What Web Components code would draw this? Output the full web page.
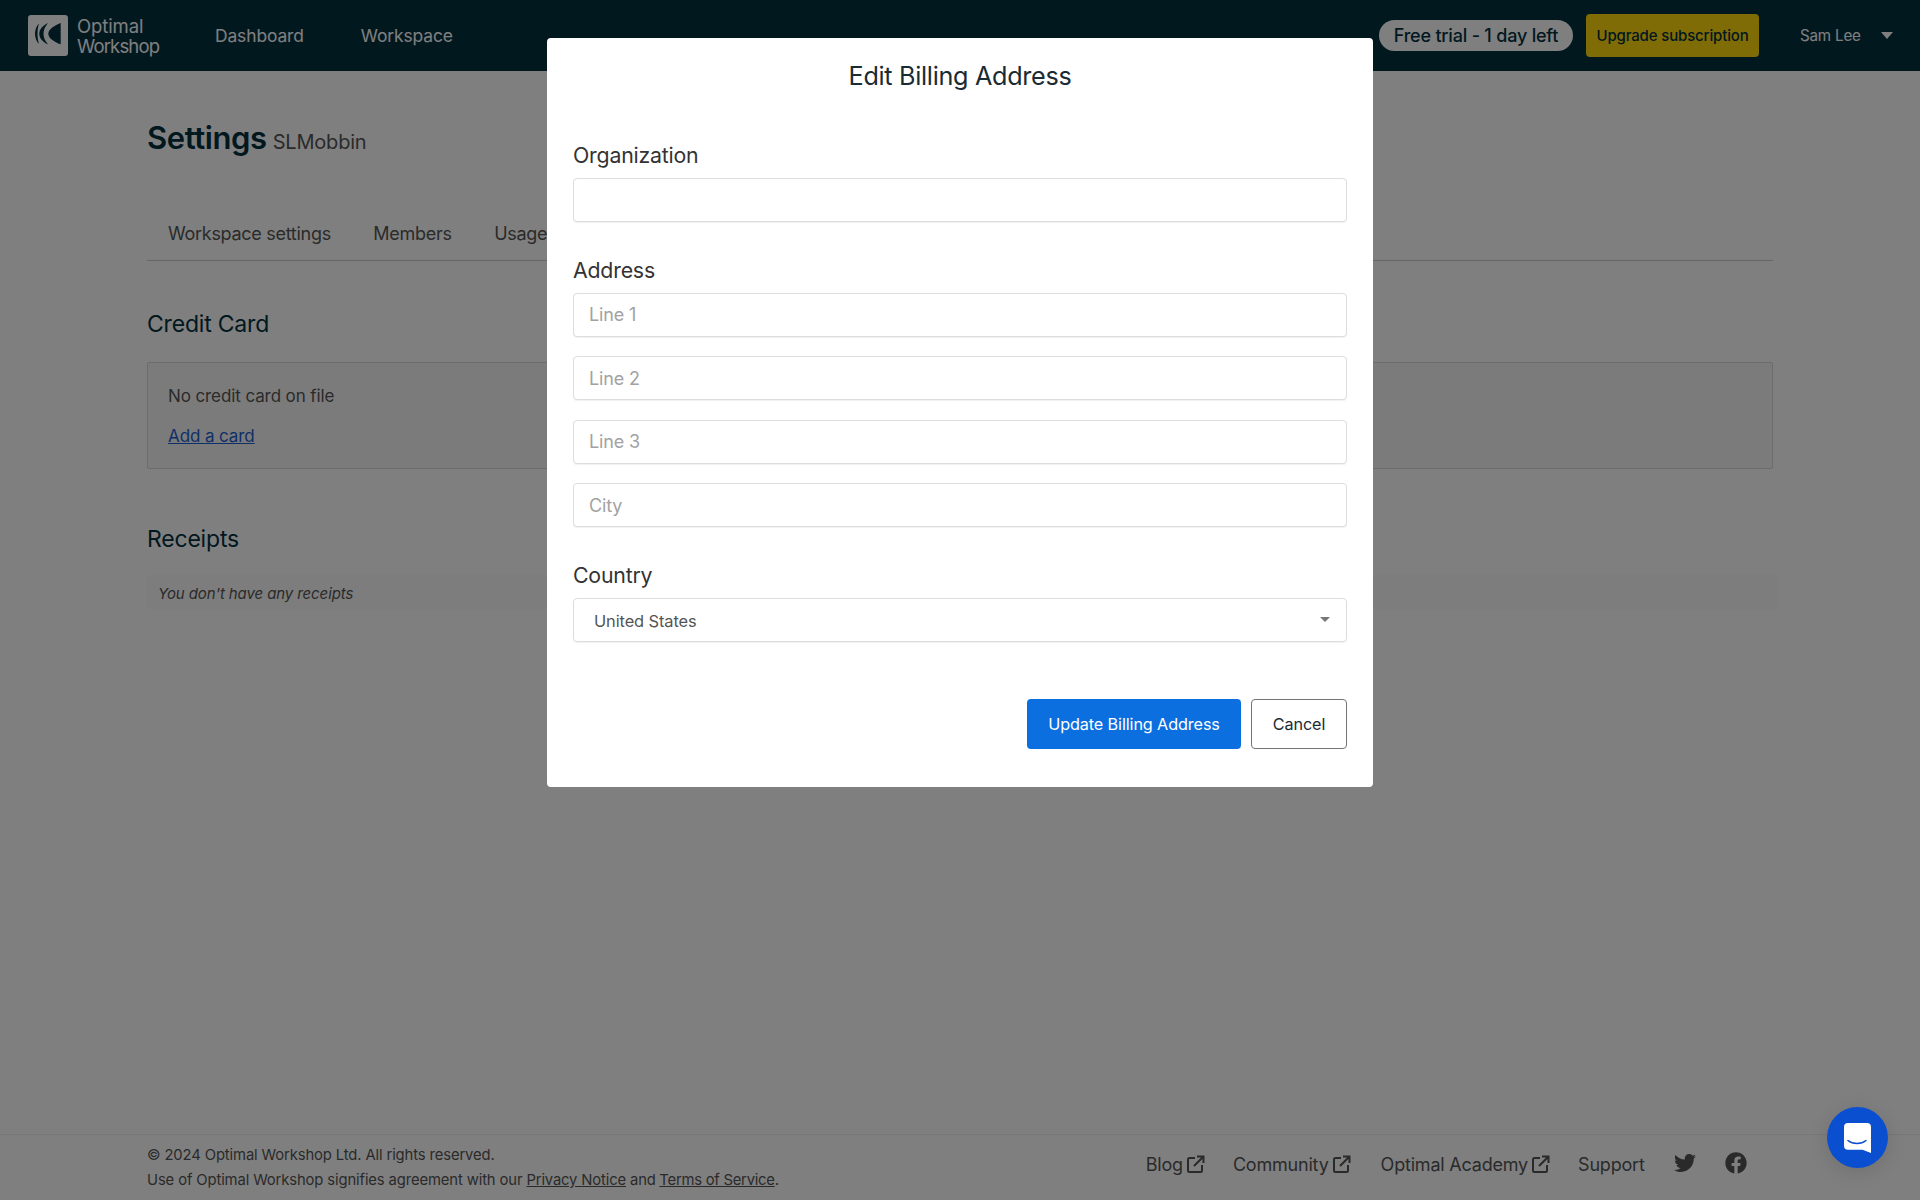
<!doctype html>
<html>
  <head>
    <title>Settings • Edit Billing Address</title>
    <style>
      :root {
        --ui-font: Inter, "Noto Sans", "Liberation Sans", sans-serif;
      }

      html, body {
        height: 100%;
      }

      body {
        margin: 0;
        background: #fff;
        color: #1b2b33;
        font-family: var(--ui-font);
        overflow: hidden;
      }

      settings-page {
        height: 100vh;
      }
    </style>
  </head>
  <body>
    <settings-page>
      <app-header slot="header"></app-header>

      <page-title name="Settings" account="SLMobbin"></page-title>
      <tab-bar>
        <tab-item>Workspace settings</tab-item>
        <tab-item>Members</tab-item>
        <tab-item>Usage</tab-item>
      </tab-bar>

      <section-block heading="Credit Card" style="--head-gap: 23px; padding-top: 48px">
        <info-panel>
          <div>No credit card on file</div>
          <a href="#">Add a card</a>
        </info-panel>
      </section-block>

      <section-block heading="Receipts" style="--head-gap: 21px; margin-top: 55px">
        <empty-row>You don't have any receipts</empty-row>
      </section-block>

      <app-footer slot="footer"></app-footer>
    </settings-page>

    <modal-backdrop>
      <billing-modal></billing-modal>
    </modal-backdrop>

    <chat-launcher></chat-launcher>

    <!-- lib code below -->

    <template data-name="settings-page">
      <style>
        :host {
          box-sizing: border-box;
          display: flex;
          flex-direction: column;
        }

        main {
          flex: 1;
          padding: 0 147px 0 147px;
        }
      </style>

      <slot name="header"></slot>
      <main><slot></slot></main>
      <slot name="footer"></slot>
    </template>

    <template data-name="app-header">
      <style>
        :host {
          align-items: center;
          background: #04303f;
          box-sizing: border-box;
          display: flex;
          height: 71px;
          padding: 0 27px 0 28px;
        }

        .logo {
          align-items: center;
          color: #fff;
          display: flex;
          font-size: 18.5px;
          gap: 9px;
          line-height: 20px;
          letter-spacing: -0.1px;
          width: 187px;
        }

        .logo svg {
          display: block;
        }

        .logo b {
          font-weight: 400;
          letter-spacing: -0.85px;
        }

        nav {
          display: flex;
          flex: 1;
          gap: 57px;
        }

        nav span {
          color: #fff;
          font-size: 17.4px;
          letter-spacing: -0.1px;
        }

        .trial {
          background: #fff;
          border-radius: 16px;
          box-sizing: border-box;
          color: #04303f;
          font-size: 18px;
          font-weight: 500;
          height: 31px;
          letter-spacing: -0.2px;
          line-height: 31px;
          text-align: center;
          width: 194px;
        }

        .upgrade {
          background: #ffd90c;
          border-radius: 4px;
          box-sizing: border-box;
          color: #04303f;
          font-size: 15px;
          font-weight: 500;
          height: 43px;
          letter-spacing: -0.15px;
          line-height: 43px;
          margin: 0 41px 0 13px;
          text-align: center;
          width: 173px;
        }

        .user {
          color: #fff;
          font-size: 15.2px;
          letter-spacing: -0.2px;
          width: 81px;
        }

        .caret {
          border-left: 6px solid transparent;
          border-right: 6px solid transparent;
          border-top: 7px solid #fff;
          height: 0;
          width: 0;
        }
      </style>

      <div class="logo">
        <svg width="40" height="41" viewBox="0 0 40 41">
          <rect width="40" height="41" rx="3" fill="#fff"/>
          <path fill="#04303f" d="M32.700 8 C26 10.500 20.300 14.500 20.300 18.700 C20.300 23 26 27 32.700 29.300 Z"/>
          <path fill="#04303f" d="M20 8 C14.500 10.500 11.300 14.500 11.300 18.700 C11.300 23 14.500 27 20 29.300 C17 26 15.500 22.500 15.500 18.700 C15.500 15 17 11.500 20 8 Z"/>
          <path fill="#04303f" d="M11 8.500 C8.500 11 7 14.500 7 18.700 C7 23 8.500 26.500 11 29 C10 26 9.500 22.500 9.500 18.700 C9.500 15 10 11.500 11 8.500 Z"/>
        </svg>
        <div>Optimal<br><b>Workshop</b></div>
      </div>
      <nav>
        <span>Dashboard</span>
        <span>Workspace</span>
      </nav>
      <div class="trial">Free trial - 1 day left</div>
      <div class="upgrade">Upgrade subscription</div>
      <div class="user">Sam Lee</div>
      <div class="caret"></div>
    </template>

    <template data-name="page-title">
      <style>
        :host {
          align-items: baseline;
          display: flex;
          gap: 6px;
          padding-top: 45.5px;
        }

        h1 {
          color: #04303f;
          font-size: 31px;
          font-weight: 600;
          letter-spacing: -0.4px;
          line-height: 42px;
          margin: 0;
        }

        span {
          color: #555;
          font-size: 20px;
          letter-spacing: -0.2px;
        }
      </style>

      <h1></h1>
      <span></span>
    </template>

    <template data-name="tab-bar">
      <style>
        :host {
          border-bottom: 1px solid #ccc;
          display: flex;
          gap: 42.5px;
          height: 50px;
          margin-top: 51.5px;
          padding-left: 21px;
        }
      </style>

      <slot></slot>
    </template>

    <template data-name="tab-item">
      <style>
        :host {
          color: #555;
          display: block;
          font-size: 18px;
          letter-spacing: -0.29px;
          line-height: 26px;
          padding-top: 11px;
        }
      </style>

      <slot></slot>
    </template>

    <template data-name="section-block">
      <style>
        :host {
          display: block;
        }

        h2 {
          color: #04303f;
          font-size: 23px;
          font-weight: 400;
          letter-spacing: -0.2px;
          line-height: 30px;
          margin: 0 0 var(--head-gap);
        }
      </style>

      <h2></h2>
      <slot></slot>
    </template>

    <template data-name="info-panel">
      <style>
        :host {
          background: #f7f7f7;
          border: 1px solid #d8d8d8;
          border-radius: 2px;
          box-sizing: border-box;
          color: #555;
          display: flex;
          flex-direction: column;
          font-size: 17px;
          gap: 16px;
          height: 107px;
          letter-spacing: -0.1px;
          line-height: 24px;
          padding: 21px 20px;
        }

        ::slotted(a) {
          color: #1f5fd0;
          text-decoration: underline;
        }
      </style>

      <slot></slot>
    </template>

    <template data-name="empty-row">
      <style>
        :host {
          background: #fafafa;
          box-sizing: border-box;
          color: #555;
          display: block;
          font-size: 15px;
          font-style: italic;
          height: 34px;
          letter-spacing: -0.1px;
          line-height: 35px;
          margin-right: -4px;
          padding: 1px 0 0 11px;
        }
      </style>

      <slot></slot>
    </template>

    <template data-name="app-footer">
      <style>
        :host {
          align-items: flex-start;
          border-top: 1px solid #eee;
          box-sizing: border-box;
          color: #555;
          display: flex;
          height: 66px;
          justify-content: space-between;
          padding: 8px 173px 0 147px;
        }

        .legal {
          font-size: 14.8px;
          letter-spacing: -0.12px;
          line-height: 25px;
        }

        .legal a {
          color: inherit;
          letter-spacing: -0.14px;
          text-decoration: underline;
        }

        .legal a.terms {
          letter-spacing: -0.24px;
          margin-left: -0.5px;
        }

        .links {
          align-items: center;
          display: flex;
          font-size: 18px;
          letter-spacing: -0.2px;
          padding-top: 11px;
        }

        .links span {
          align-items: center;
          display: flex;
          gap: 3px;
          margin-right: 28px;
        }

        .links span.wide {
          margin-right: 30px;
        }

        .links svg {
          display: block;
        }
      </style>

      <div class="legal">
        <div>© 2024 Optimal Workshop Ltd. All rights reserved.</div>
        <div>Use of Optimal Workshop signifies agreement with our <a href="#">Privacy Notice</a> and <a class="terms" href="#">Terms of Service</a>.</div>
      </div>
      <div class="links">
        <span>Blog<svg width="19" height="19" viewBox="0 0 19 19" fill="none" stroke="#555" stroke-width="2"><path d="M9 3H3.500A1.500 1.500 0 0 0 2 4.500V15.500A1.500 1.500 0 0 0 3.500 17H14.500A1.500 1.500 0 0 0 16 15.500V10"/><path d="M8 11L17 2M11 1.500H17.500V8"/></svg></span>
        <span class="wide">Community<svg width="19" height="19" viewBox="0 0 19 19" fill="none" stroke="#555" stroke-width="2"><path d="M9 3H3.500A1.500 1.500 0 0 0 2 4.500V15.500A1.500 1.500 0 0 0 3.500 17H14.500A1.500 1.500 0 0 0 16 15.500V10"/><path d="M8 11L17 2M11 1.500H17.500V8"/></svg></span>
        <span>Optimal Academy<svg width="19" height="19" viewBox="0 0 19 19" fill="none" stroke="#555" stroke-width="2"><path d="M9 3H3.500A1.500 1.500 0 0 0 2 4.500V15.500A1.500 1.500 0 0 0 3.500 17H14.500A1.500 1.500 0 0 0 16 15.500V10"/><path d="M8 11L17 2M11 1.500H17.500V8"/></svg></span>
        <span>Support</span>
        <svg style="margin: -4px 29px 0 1.4px" width="22" height="22" viewBox="0 0 512 512" fill="#555"><path d="M459.37 151.716c.325 4.548.325 9.097.325 13.645 0 138.72-105.583 298.558-298.558 298.558-59.452 0-114.68-17.219-161.137-47.106 8.447.974 16.568 1.299 25.34 1.299 49.055 0 94.213-16.568 130.274-44.832-46.132-.975-84.792-31.188-98.112-72.772 6.498.974 12.995 1.624 19.818 1.624 9.421 0 18.843-1.3 27.614-3.573-48.081-9.747-84.143-51.98-84.143-102.985v-1.299c13.969 7.797 30.214 12.67 47.431 13.319-28.264-18.843-46.781-51.005-46.781-87.391 0-19.492 5.197-37.36 14.294-52.954 51.655 63.675 129.3 105.258 216.365 109.807-1.624-7.797-2.599-15.918-2.599-24.04 0-57.828 46.782-104.934 104.934-104.934 30.213 0 57.502 12.67 76.67 33.137 23.715-4.548 46.456-13.32 66.599-25.34-7.798 24.366-24.366 44.833-46.132 57.827 21.117-2.273 41.584-8.122 60.426-16.243-14.292 20.791-32.161 39.308-52.628 54.253z"/></svg>
        <svg style="margin-top: -4px" width="22" height="22" viewBox="0 0 512 512" fill="#555"><path d="M504 256C504 119 393 8 256 8S8 119 8 256c0 123.780 90.690 226.380 209.250 245V327.690h-63V256h63v-54.640c0-62.150 37-96.480 93.670-96.480 27.140 0 55.520 4.840 55.520 4.840v61h-31.280c-30.800 0-40.410 19.120-40.410 38.730V256h68.780l-11 71.690h-57.780V501C413.310 482.380 504 379.780 504 256z"/></svg>
      </div>
    </template>

    <template data-name="modal-backdrop">
      <style>
        :host {
          background: rgba(0, 0, 0, 0.5);
          display: flex;
          inset: 0;
          justify-content: center;
          padding-top: 38px;
          position: fixed;
        }
      </style>

      <slot></slot>
    </template>

    <template data-name="billing-modal">
      <style>
        :host {
          background: #fff;
          border-radius: 4px;
          box-sizing: border-box;
          display: block;
          height: 749px;
          padding: 20px 26px 0;
          width: 826px;
        }

        h2 {
          color: #1b2b33;
          font-size: 25.2px;
          font-weight: 400;
          letter-spacing: -0.3px;
          line-height: 36px;
          margin: 0 0 46px;
          text-align: center;
        }

        .stack {
          display: flex;
          flex-direction: column;
          gap: 19.5px;
        }

        form-field {
          margin-bottom: 32.5px;
        }

        .actions {
          display: flex;
          gap: 10px;
          justify-content: flex-end;
          margin-top: 57px;
        }

        button {
          border-radius: 4px;
          box-sizing: border-box;
          font-family: inherit;
          font-size: 16.2px;
          height: 50px;
          letter-spacing: -0.1px;
        }

        .primary {
          background: #0b6fe0;
          border: 0;
          color: #fff;
          width: 214px;
        }

        .secondary {
          background: #fff;
          border: 1px solid #757575;
          color: #1b2b33;
          width: 96px;
        }
      </style>

      <h2>Edit Billing Address</h2>
      <form-field label="Organization">
        <text-box></text-box>
      </form-field>
      <form-field label="Address">
        <div class="stack">
          <text-box placeholder="Line 1"></text-box>
          <text-box placeholder="Line 2"></text-box>
          <text-box placeholder="Line 3"></text-box>
          <text-box placeholder="City"></text-box>
        </div>
      </form-field>
      <form-field label="Country" style="margin-bottom: 0">
        <select-box>United States</select-box>
      </form-field>
      <div class="actions">
        <button class="primary">Update Billing Address</button>
        <button class="secondary">Cancel</button>
      </div>
    </template>

    <template data-name="form-field">
      <style>
        :host {
          display: block;
        }

        label {
          color: #333;
          display: block;
          font-size: 21.3px;
          letter-spacing: -0.2px;
          line-height: 30px;
          margin-bottom: 8px;
        }
      </style>

      <label></label>
      <slot></slot>
    </template>

    <template data-name="text-box">
      <style>
        :host {
          display: block;
        }

        input {
          border: 1px solid #ddd;
          border-radius: 4px;
          box-shadow: 0 1px 1px rgba(0, 0, 0, 0.06);
          box-sizing: border-box;
          color: #333;
          display: block;
          font-family: inherit;
          font-size: 18px;
          height: 44px;
          letter-spacing: -0.15px;
          padding: 0 15px;
          width: 100%;
        }

        input::placeholder {
          color: #a2a2a2;
          opacity: 1;
        }
      </style>

      <input type="text">
    </template>

    <template data-name="select-box">
      <style>
        :host {
          align-items: center;
          border: 1px solid #ddd;
          border-radius: 4px;
          box-shadow: 0 1px 1px rgba(0, 0, 0, 0.06);
          box-sizing: border-box;
          color: #555;
          display: flex;
          font-size: 16.4px;
          height: 44px;
          justify-content: space-between;
          letter-spacing: -0.1px;
          padding: 3px 16px 0 20px;
        }

        .caret {
          border-left: 5px solid transparent;
          border-right: 5px solid transparent;
          border-top: 5px solid #777;
          margin-top: -3px;
        }
      </style>

      <span><slot></slot></span>
      <div class="caret"></div>
    </template>

    <template data-name="chat-launcher">
      <style>
        :host {
          background: #0a4fd0;
          border-radius: 50%;
          bottom: 32px;
          box-shadow: 0 4px 20px rgba(0, 0, 0, 0.12);
          display: flex;
          align-items: center;
          justify-content: center;
          height: 61px;
          position: fixed;
          right: 32px;
          width: 61px;
        }

        svg {
          display: block;
        }
      </style>

      <svg width="27" height="30" viewBox="0 0 27 30">
        <path fill="#fff" d="M4 0H23A4 4 0 0 1 27 4V30L18.500 26.700H4A4 4 0 0 1 0 22.700V4A4 4 0 0 1 4 0Z"/>
        <path fill="none" stroke="#0a4fd0" stroke-width="1.500" stroke-linecap="round" d="M4 17.500C9 21.500 17 21.500 22 17.500"/>
      </svg>
    </template>

    <script>
      function stamp(el, name) {
        const template = document.querySelector(`template[data-name="${name}"]`)
        el.attachShadow({ mode: 'open' })
        el.shadowRoot.append(template.content.cloneNode(true))
      }

      // elements that only need their template
      for (const name of ['settings-page', 'app-header', 'tab-bar', 'tab-item', 'info-panel', 'empty-row', 'app-footer', 'modal-backdrop', 'billing-modal', 'select-box', 'chat-launcher']) {
        customElements.define(name, class extends HTMLElement {
          connectedCallback() {
            if (!this.shadowRoot) stamp(this, name)
          }
        })
      }

      customElements.define('page-title', class extends HTMLElement {
        connectedCallback() {
          stamp(this, 'page-title')
          this.shadowRoot.querySelector('h1').textContent = this.getAttribute('name')
          this.shadowRoot.querySelector('span').textContent = this.getAttribute('account')
        }
      })

      customElements.define('section-block', class extends HTMLElement {
        connectedCallback() {
          stamp(this, 'section-block')
          this.shadowRoot.querySelector('h2').textContent = this.getAttribute('heading')
        }
      })

      customElements.define('form-field', class extends HTMLElement {
        connectedCallback() {
          stamp(this, 'form-field')
          this.shadowRoot.querySelector('label').textContent = this.getAttribute('label')
        }
      })

      customElements.define('text-box', class extends HTMLElement {
        connectedCallback() {
          stamp(this, 'text-box')
          const placeholder = this.getAttribute('placeholder')
          if (placeholder) this.shadowRoot.querySelector('input').placeholder = placeholder
        }
      })
    </script>
  </body>
</html>
